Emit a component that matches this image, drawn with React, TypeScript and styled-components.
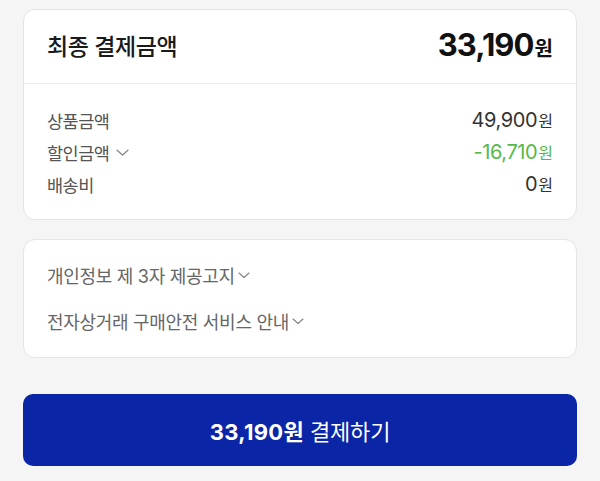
import styled, { createGlobalStyle } from "styled-components";

const GlobalStyle = createGlobalStyle`
  html, body {
    margin: 0;
    padding: 0;
    background: #f5f5f5;
  }
  body {
    font-family: Inter, "Noto Sans CJK KR", "Noto Sans", sans-serif;
    -webkit-font-smoothing: antialiased;
  }
`;

const Chevron = ({ size = 12 }: { size?: number }) => (
  <ChevronSvg width={size} height={size * 0.6} viewBox="0 0 12 7" fill="none">
    <path d="M1 1l5 4.5L11 1" stroke="#8a8a8a" strokeWidth="1.3" strokeLinecap="round" strokeLinejoin="round" />
  </ChevronSvg>
);

const App = () => (
  <Page>
    <GlobalStyle />
    <Card>
      <Header>
        <Title>최종 결제금액</Title>
        <Total>
          33,190<Unit $size={20}>원</Unit>
        </Total>
      </Header>
      <Rows>
        <Row>
          <Label>상품금액</Label>
          <Value>
            49,900<Unit $size={16}>원</Unit>
          </Value>
        </Row>
        <Row>
          <Label>
            할인금액 <Chevron size={13} />
          </Label>
          <Value $color="#55b94a">
            -16,710<Unit $size={16}>원</Unit>
          </Value>
        </Row>
        <Row>
          <Label>배송비</Label>
          <Value>
            0<Unit $size={16}>원</Unit>
          </Value>
        </Row>
      </Rows>
    </Card>

    <Notices>
      <Notice>
        개인정보 제 3자 제공고지<Chevron />
      </Notice>
      <Notice>
        전자상거래 구매안전 서비스 안내<Chevron />
      </Notice>
    </Notices>

    <PayButton>
      <strong>33,190원</strong> 결제하기
    </PayButton>
  </Page>
);

export default App;

const Page = styled.div`
  display: flex;
  flex-direction: column;
  padding: 9px 23px 16px;
  width: 600px;
  box-sizing: border-box;
`;

const Card = styled.section`
  background: #fff;
  border: 1px solid #e4e4e4;
  border-radius: 12px;
  overflow: hidden;
`;

const Header = styled.div`
  display: flex;
  justify-content: space-between;
  align-items: center;
  height: 74px;
  padding: 0 23px 4px;
  box-sizing: border-box;
  border-bottom: 1px solid #ececec;
`;

const Title = styled.h2`
  margin: 0;
  font-size: 23px;
  font-weight: 500;
  color: #1a1a1a;
  letter-spacing: -0.4px;
`;

const Total = styled.div`
  font-size: 31px;
  font-weight: 700;
  color: #111;
  letter-spacing: -0.9px;
  display: flex;
  align-items: baseline;
`;

const Unit = styled.span<{ $size: number }>`
  font-size: ${(p) => p.$size}px;
  font-weight: inherit;
  letter-spacing: 0;
  margin-left: 1px;
`;

const Rows = styled.div`
  display: flex;
  flex-direction: column;
  padding: 20px 23px 19px;
`;

const Row = styled.div`
  display: flex;
  justify-content: space-between;
  align-items: center;
  height: 32px;
`;

const Label = styled.span`
  display: flex;
  align-items: center;
  gap: 4px;
  font-size: 17.5px;
  color: #555;
  letter-spacing: -0.5px;
`;

const Value = styled.span<{ $color?: string }>`
  display: flex;
  align-items: baseline;
  font-size: 20px;
  color: ${(p) => p.$color || "#333"};
  letter-spacing: -0.4px;
`;

const ChevronSvg = styled.svg`
  display: inline-block;
  margin-left: 3px;
  margin-top: 2px;
`;

const Notices = styled(Card)`
  margin-top: 19px;
  display: flex;
  flex-direction: column;
  gap: 14px;
  padding: 19px 23px 20px;
`;

const Notice = styled.div`
  display: flex;
  align-items: center;
  height: 32px;
  font-size: 18px;
  color: #666;
  letter-spacing: -0.3px;
`;

const PayButton = styled.button`
  margin-top: 36px;
  height: 72px;
  border: none;
  border-radius: 10px;
  background: #0b25a7;
  color: #fff;
  font-family: Inter, "Noto Sans CJK KR", sans-serif;
  font-size: 22px;
  font-weight: 400;
  letter-spacing: -0.2px;
  cursor: pointer;

  strong {
    font-weight: 700;
    letter-spacing: 0.3px;
  }
`;
